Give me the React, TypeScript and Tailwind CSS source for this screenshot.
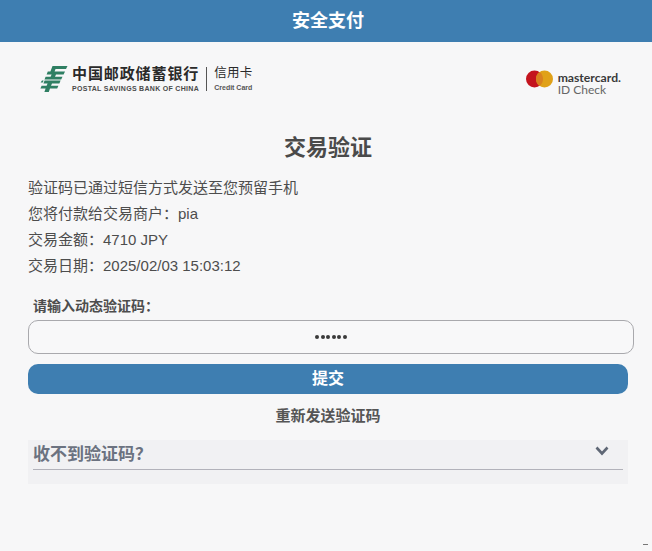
import React from "react";

const cjk = "font-['Liberation_Sans','Noto_Sans_CJK_SC',sans-serif]";

function BankMark() {
  return (
    <svg width="28" height="26" viewBox="0 0 28 26" className="shrink-0">
      <g fill="#2f7f63">
        <path d="M12.5 0 H27.5 L26 3 H15.5 L14.6 5.4 H25 L23.6 8.4 H16 L15 10.8 H22.5 L21.2 13.6 H4.5 L5.6 10.8 H10.6 L11.6 8.4 H6.6 L7.8 5.4 H10.4 Z" />
        <path d="M2 14.6 H3.6 L2.8 16.6 H0.6 Z" />
        <path d="M4.6 14.6 H20.6 L19.4 17.4 H12 L11 19.8 H18.4 L17.2 22.6 H10 L8.8 26 H4.4 L5.6 22.6 H0.4 L1.6 19.8 H6.6 L7.6 17.4 H3.4 Z" />
      </g>
    </svg>
  );
}

function BankLogo() {
  return (
    <div className="flex items-center">
      <BankMark />
      <div className="ml-[4px] flex flex-col">
        <span className="text-[15px] leading-[17px] font-bold tracking-[0.9px] text-[#2a2a2a] whitespace-nowrap">中国邮政储蓄银行</span>
        <span className="mt-[2px] text-[7px] leading-[9px] font-bold tracking-[0.3px] text-[#4a4a4a] whitespace-nowrap">POSTAL SAVINGS BANK OF CHINA</span>
      </div>
      <div className="mx-[7px] h-[24px] w-px bg-[#555]" />
      <div className="flex flex-col">
        <span className="text-[12.5px] leading-[15px] tracking-[0.3px] text-[#2a2a2a] whitespace-nowrap">信用卡</span>
        <span className="mt-[2px] text-[7px] leading-[9px] font-bold text-[#555] whitespace-nowrap">Credit Card</span>
      </div>
    </div>
  );
}

function MastercardLogo() {
  return (
    <div className="flex items-start">
      <svg width="27" height="18" viewBox="0 0 27 18" className="shrink-0">
        <circle cx="8.5" cy="9" r="8.5" fill="#c4141e" />
        <circle cx="18.5" cy="9" r="8.5" fill="#e0a118" />
        <path d="M13.5 2.1 A8.5 8.5 0 0 1 13.5 15.9 A8.5 8.5 0 0 1 13.5 2.1 Z" fill="#d9801f" />
      </svg>
      <div className="ml-[5px] mt-[1px] flex flex-col font-['Lato',sans-serif]">
        <span className="text-[12.2px] leading-[13px] font-bold text-[#3a3a3a] whitespace-nowrap">mastercard.</span>
        <span className="text-[12px] leading-[12px] text-[#666] whitespace-nowrap">ID Check</span>
      </div>
    </div>
  );
}

export default function App() {
  return (
    <div className={`relative flex h-[551px] w-[652px] flex-col overflow-hidden bg-[#f7f7f8] ${cjk}`}>
      <header className="flex h-[42px] items-center justify-center bg-[#3e7eb1] pl-[4px] text-[18px] font-bold text-white">安全支付</header>

      <div className="flex h-[84px] items-start justify-between pl-[40px] pr-[31px] pt-[23px]">
        <BankLogo />
        <div className="pt-[5px]"><MastercardLogo /></div>
      </div>

      <h1 className="mt-[3px] h-[38px] pl-[4px] text-center text-[22px] leading-[38px] font-bold text-[#4a4a4a]">交易验证</h1>

      <div className="mt-[8px] flex flex-col pl-[28px] text-[15px] leading-[26px] text-[#4d4d4d]">
        <p>验证码已通过短信方式发送至您预留手机</p>
        <p>您将付款给交易商户：pia</p>
        <p>交易金额：4710 JPY</p>
        <p>交易日期：2025/02/03 15:03:12</p>
      </div>

      <label className="mt-[17px] pl-[33px] text-[14px] leading-[20px] font-bold text-[#4d4d4d]">请输入动态验证码：</label>

      <div className="ml-[28px] mt-[4px] flex h-[34px] w-[606px] items-center justify-center rounded-[10px] border border-[#a9a9ad] bg-[#f8f8f9] text-[#333]">
        <div className="flex gap-[1.5px]">
          {[0, 1, 2, 3, 4, 5].map((i) => (
            <span key={i} className="h-[4px] w-[4px] rounded-full bg-[#3a3a3a]" />
          ))}
        </div>
      </div>

      <button className="ml-[28px] mt-[10px] h-[30px] w-[600px] rounded-[10px] bg-[#3e7eb1] text-[16px] font-bold text-white">提交</button>

      <div className="mt-[12px] h-[20px] pl-[4px] text-center text-[15px] leading-[20px] font-bold text-[#555]">重新发送验证码</div>

      <div className="ml-[28px] mt-[14px] h-[44px] w-[600px] bg-[#f1f1f3] px-[5px]">
        <div className="flex h-[30px] items-start justify-between border-b border-[#b2b2ba]">
          <span className="pt-[1px] text-[17px] leading-[28px] font-bold text-[#6b7280]">收不到验证码？</span>
          <svg width="14" height="10" viewBox="0 0 14 10" className="mr-[14px] mt-[6px]" fill="none" stroke="#5f6775" strokeWidth="2.6">
            <path d="M1.5 1.5 L7 7.5 L12.5 1.5" />
          </svg>
        </div>
      </div>

      <span className="absolute bottom-[6px] right-[4px] h-px w-[5px] bg-[#777]" />
    </div>
  );
}
